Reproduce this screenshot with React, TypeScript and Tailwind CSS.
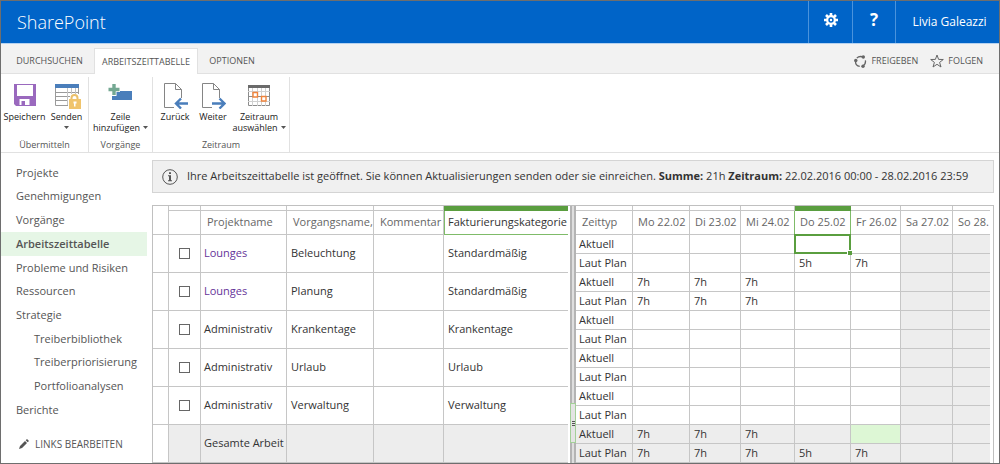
import React, { useState } from 'react';
import clsx from 'clsx';

const navLinks = [
  { label: 'Projekte' },
  { label: 'Genehmigungen' },
  { label: 'Vorgänge' },
  { label: 'Arbeitszeittabelle', active: true },
  { label: 'Probleme und Risiken' },
  { label: 'Ressourcen' },
  { label: 'Strategie' },
  { label: 'Treiberbibliothek', child: true },
  { label: 'Treiberpriorisierung', child: true },
  { label: 'Portfolioanalysen', child: true },
  { label: 'Berichte' },
];

const tasks = [
  { id: 1, project: 'Lounges', link: true, task: 'Beleuchtung', category: 'Standardmäßig' },
  { id: 2, project: 'Lounges', link: true, task: 'Planung', category: 'Standardmäßig' },
  { id: 3, project: 'Administrativ', task: 'Krankentage', category: 'Krankentage' },
  { id: 4, project: 'Administrativ', task: 'Urlaub', category: 'Urlaub' },
  { id: 5, project: 'Administrativ', task: 'Verwaltung', category: 'Verwaltung' },
];

const days = ['Mo 22.02', 'Di 23.02', 'Mi 24.02', 'Do 25.02', 'Fr 26.02', 'Sa 27.02', 'So 28.'];
const SELECTED_DAY = 3;

const hours = [
  { type: 'Aktuell', values: ['', '', '', '', '', '', ''] },
  { type: 'Laut Plan', values: ['', '', '', '5h', '7h', '', ''] },
  { type: 'Aktuell', values: ['7h', '7h', '7h', '', '', '', ''] },
  { type: 'Laut Plan', values: ['7h', '7h', '7h', '', '', '', ''] },
  { type: 'Aktuell', values: ['', '', '', '', '', '', ''] },
  { type: 'Laut Plan', values: ['', '', '', '', '', '', ''] },
  { type: 'Aktuell', values: ['', '', '', '', '', '', ''] },
  { type: 'Laut Plan', values: ['', '', '', '', '', '', ''] },
  { type: 'Aktuell', values: ['', '', '', '', '', '', ''] },
  { type: 'Laut Plan', values: ['', '', '', '', '', '', ''] },
  { type: 'Aktuell', values: ['7h', '7h', '7h', '', '', '', ''], total: true },
  { type: 'Laut Plan', values: ['7h', '7h', '7h', '5h', '7h', '', ''], total: true },
];

const SaveIcon = () => (
  <svg width="24" height="24" viewBox="0 0 24 24" className="shrink-0" aria-hidden="true">
    <path d="M1 1h22v22H3l-2-2z" fill="#9a69be" />
    <path d="M4 2h16v11H4z" fill="#fff" />
    <path d="M6.500 16h10v6h-10z" fill="#fff" />
    <path d="M8.500 18H12v5H8.500z" fill="#9a69be" />
  </svg>
);

const SendIcon = () => (
  <svg width="28" height="26" viewBox="0 0 28 26" className="shrink-0" aria-hidden="true">
    <path d="M2 1h24v4H2z" fill="#4a7ebb" />
    <path d="M2.500 5v17.500h23V5M2 9.500h24M2 13.500h24M2 17.500h24" fill="none" stroke="#9a9a9a" />
    <path d="M14.500 5v17M18.500 5v17M22.500 5v17" stroke="#c4c4c4" />
    <path d="M15 15h13v11H15zM17 11h9v5h-9z" fill="#fff" />
    <path d="M18.500 16.500V15a3 3 0 0 1 6 0v1.500" fill="none" stroke="#ebc06a" strokeWidth="2" />
    <path d="M16 16h12v10H16z" fill="#f0c46c" />
    <path d="M20.500 18.500h3v2h-1v3H21v-3h-.5z" fill="#fff" />
  </svg>
);

const AddRowIcon = () => (
  <svg width="28" height="24" viewBox="0 0 28 24" className="shrink-0" aria-hidden="true">
    <path d="M5 8h20v9H5z" fill="#4a7ebb" />
    <path d="M7 0v13M1 6.500h12" stroke="#fff" strokeWidth="5" />
    <path d="M7 1v11M1.500 6.500h11" stroke="#74a892" strokeWidth="3.400" />
  </svg>
);

const PageIcon = ({ direction }: { direction: 'back' | 'next' }) => (
  <svg width="26" height="26" viewBox="0 0 26 26" className="shrink-0" aria-hidden="true">
    <path d="M2.500 .5h11l6 6v18h-17zM13.500 .5v6h6" fill="#fff" stroke="#858585" />
    <path d="M12 15h14v11H12z" fill="#fff" />
    {direction === 'back' ? (
      <path d="M26 20.500H14M19 15.500l-5 5 5 5" fill="none" stroke="#4a7ebb" strokeWidth="2.400" />
    ) : (
      <path d="M12 20.500h12.500M19.500 15.500l5 5-5 5" fill="none" stroke="#4a7ebb" strokeWidth="2.400" />
    )}
  </svg>
);

const CalendarIcon = () => (
  <svg width="24" height="24" viewBox="0 0 24 24" className="shrink-0" aria-hidden="true">
    <path d="M1 2h22v3H1z" fill="#6a6a6a" />
    <path d="M1.500 5v17.500h21V5" fill="#fff" stroke="#8c8c8c" />
    <path d="M1 8.500h22M1 18.500h22M5.500 5v18M10.500 5v18M14.500 5v18M18.500 5v18" stroke="#d0d0d0" />
    <path d="M1 13.500h22" stroke="#8c8c8c" />
    <path d="M6 9.500h4.500V14H6zM14.500 13.500H19V18h-4.500z" fill="#fff" stroke="#f0843c" strokeWidth="1.400" />
  </svg>
);

const GearIcon = () => (
  <svg width="14" height="14" viewBox="0 0 14 14" className="shrink-0" aria-hidden="true">
    <path d="M7 0v14M0 7h14M2 2l10 10M12 2L2 12" stroke="#fff" strokeWidth="2.600" />
    <circle cx="7" cy="7" r="3.800" fill="#0064c8" stroke="#fff" strokeWidth="2.200" />
    <circle cx="7" cy="7" r="1.200" fill="#fff" />
  </svg>
);

const ShareIcon = () => (
  <svg width="13" height="13" viewBox="0 0 13 13" className="shrink-0" aria-hidden="true">
    <circle cx="6.500" cy="6.500" r="5" fill="none" stroke="#666" strokeWidth="1.300" strokeDasharray="7.500 2.970" strokeDashoffset="2" />
    <circle cx="9.300" cy="2" r="1.700" fill="#666" />
    <circle cx="1.800" cy="5.500" r="1.700" fill="#666" />
    <circle cx="9" cy="11.200" r="1.700" fill="#666" />
  </svg>
);

const StarIcon = () => (
  <svg width="14" height="14" viewBox="0 0 14 14" className="shrink-0" aria-hidden="true">
    <path d="M7 1l1.600 4.400 4.700.1-3.700 2.900 1.400 4.600L7 10.300 3 13l1.400-4.600L.7 5.500l4.700-.1z" fill="none" stroke="#666" />
  </svg>
);

const InfoIcon = () => (
  <svg width="16" height="16" viewBox="0 0 16 16" className="shrink-0" aria-hidden="true">
    <circle cx="8" cy="8" r="7.300" fill="none" stroke="#555" />
    <path d="M7 3.300h2v1.600H7zM6 6.300h3v5h1v1H6v-1h1v-4H6z" fill="#555" />
  </svg>
);

const PencilIcon = () => (
  <svg width="10" height="10" viewBox="0 0 10 10" className="shrink-0" aria-hidden="true">
    <path d="M0 10l1-3 5-5 2 2-5 5zM6.700 1.300L8 0l2 2-1.300 1.300z" fill="#555" />
  </svg>
);

const Caret = () => (
  <svg width="5" height="3" viewBox="0 0 5 3" className="inline-block shrink-0 align-middle" aria-hidden="true">
    <path d="M0 0h5L2.500 3z" fill="#555" />
  </svg>
);

type RibbonButtonProps = {
  icon: React.ReactNode;
  lines: string[];
  caret?: 'inline' | 'below';
  className: string;
};

const RibbonButton: React.FC<RibbonButtonProps> = ({ icon, lines, caret, className }) => (
  <button type="button" className={clsx('flex flex-col items-center text-[9px] leading-[11px] text-[#222]', className)}>
    <span className="flex h-7 items-start justify-center">{icon}</span>
    {lines.map((line, i) => (
      <span key={line} className="flex items-center gap-[3px] whitespace-nowrap">
        {line}
        {caret === 'inline' && i === lines.length - 1 && <Caret />}
      </span>
    ))}
    {caret === 'below' && (
      <span className="flex h-[11px] items-center">
        <Caret />
      </span>
    )}
  </button>
);

const RibbonGroup: React.FC<{ label: string; className: string; children: React.ReactNode }> = ({ label, className, children }) => (
  <div className={clsx('flex flex-col justify-between border-r border-[#e1e1e1] pt-[6px] pb-[1px]', className)}>
    <div className="flex items-start justify-center">{children}</div>
    <div className="text-center text-[9px] leading-[12px] text-[#555]">{label}</div>
  </div>
);

const cell = 'overflow-hidden whitespace-nowrap border-b border-[#c6c6c6] p-0 text-left';

const App: React.FC = () => {
  const [checked, setChecked] = useState<number[]>([]);

  const toggle = (id: number) => {
    setChecked((prev) => (prev.includes(id) ? prev.filter((c) => c !== id) : [...prev, id]));
  };

  return (
    <div className="flex h-screen flex-col overflow-hidden border border-[#6e6e6e] bg-white font-['Open_Sans','Noto_Sans',sans-serif] text-[11px] text-[#333]">
      {/* Suite bar */}
      <header className="flex h-[43px] shrink-0 items-stretch border-b border-[#b5d2f0] bg-[#0064c8] text-white">
        <div className="flex flex-1 items-center pl-4 text-[18px] font-light">SharePoint</div>
        <button type="button" aria-label="Einstellungen" className="flex w-11 items-center justify-center border-l border-[#4a93dc] pb-1">
          <GearIcon />
        </button>
        <button type="button" aria-label="Hilfe" className="flex w-[43px] items-center justify-center border-l border-[#4a93dc] pb-1 text-[17px] font-bold">
          ?
        </button>
        <button type="button" className="w-[104px] border-l border-[#4a93dc] pl-1 text-[12px]">
          Livia Galeazzi
        </button>
      </header>

      {/* Ribbon tabs */}
      <div className="flex h-[30px] shrink-0 items-end border-b border-[#e1e1e1] bg-[#f2f2f2] text-[9px] text-[#555]">
        <div className="-mb-px flex flex-1 items-end">
          <button type="button" className="h-[26px] w-[93px] pl-1">DURCHSUCHEN</button>
          <button type="button" className="h-[26px] w-[104px] border border-b-0 border-[#e1e1e1] bg-white">
            ARBEITSZEITTABELLE
          </button>
          <button type="button" className="h-[26px] w-[68px]">OPTIONEN</button>
        </div>
        <div className="flex h-6 items-center gap-3 pr-4">
          <button type="button" className="flex items-center gap-1">
            <ShareIcon />
            FREIGEBEN
          </button>
          <button type="button" className="flex items-center gap-1">
            <StarIcon />
            FOLGEN
          </button>
        </div>
      </div>

      {/* Ribbon */}
      <div className="flex h-[79px] shrink-0 border-b border-[#e1e1e1] pt-[3px]">
        <RibbonGroup label="Übermitteln" className="w-[88px]">
          <RibbonButton icon={<SaveIcon />} lines={['Speichern']} className="w-[44px]" />
          <RibbonButton icon={<SendIcon />} lines={['Senden']} caret="below" className="w-10" />
        </RibbonGroup>
        <RibbonGroup label="Vorgänge" className="w-16">
          <RibbonButton icon={<AddRowIcon />} lines={['Zeile', 'hinzufügen']} caret="inline" className="w-[60px]" />
        </RibbonGroup>
        <RibbonGroup label="Zeitraum" className="w-[137px]">
          <RibbonButton icon={<PageIcon direction="back" />} lines={['Zurück']} className="w-[38px]" />
          <RibbonButton icon={<PageIcon direction="next" />} lines={['Weiter']} className="w-[38px]" />
          <RibbonButton icon={<CalendarIcon />} lines={['Zeitraum', 'auswählen']} caret="inline" className="w-[54px]" />
        </RibbonGroup>
      </div>

      <div className="flex min-h-0 flex-1">
        {/* Quick launch */}
        <nav className="w-[146px] shrink-0 pt-2">
          <ul className="grid h-[261px] auto-rows-fr">
            {navLinks.map((link) => (
              <li key={link.label} className={clsx('flex items-center', link.active && 'bg-[#e6f6e6]')}>
                <a
                  href="#"
                  className={clsx('whitespace-nowrap text-[#555]', link.child ? 'pl-[33px]' : 'pl-[15px]', link.active && 'font-semibold')}
                >
                  {link.label}
                </a>
              </li>
            ))}
          </ul>
          <a href="#" className="mt-[10px] flex h-6 items-center gap-[6px] pl-[18px] text-[10px] text-[#555]">
            <PencilIcon />
            LINKS BEARBEITEN
          </a>
        </nav>

        <main className="flex min-w-0 flex-1 flex-col pl-[5px] pr-[5px] pt-[7px]">
          <div className="flex h-[33px] shrink-0 items-center gap-[9px] border border-[#d4d4d4] bg-[#f0f0f0] pl-[9px]">
            <InfoIcon />
            <p className="whitespace-nowrap">
              Ihre Arbeitszeittabelle ist geöffnet. Sie können Aktualisierungen senden oder sie einreichen.{' '}
              <b>Summe:</b> 21h <b>Zeitraum:</b> 22.02.2016 00:00 - 28.02.2016 23:59
            </p>
          </div>

          <div className="mt-3 flex min-h-0 flex-1 items-start overflow-hidden border border-b-0 border-[#c0c0c0]">
            {/* Task list */}
            <table className="w-[415px] shrink-0 table-fixed border-separate border-spacing-0">
              <colgroup>
                <col className="w-4" />
                <col className="w-8" />
                <col className="w-[86px]" />
                <col className="w-[87px]" />
                <col className="w-[70px]" />
                <col className="w-[124px]" />
              </colgroup>
              <thead className="text-[#666]">
                <tr className="h-[5px]" aria-hidden="true">
                  <td className="border-r border-[#c6c6c6] p-0" />
                  <td className="border-r border-b border-[#c6c6c6] p-0" />
                  <td className="border-r border-b border-[#c6c6c6] p-0" />
                  <td className="border-r border-b border-[#c6c6c6] p-0" />
                  <td className="border-r border-b border-[#c6c6c6] p-0" />
                  <td className="bg-[#5a9e3f] p-0" />
                </tr>
                <tr className="h-6">
                  <td className={clsx(cell, 'border-r')} />
                  <td className={clsx(cell, 'border-r')} />
                  <th className={clsx(cell, 'border-r pl-[6px] font-normal')}>Projektname</th>
                  <th className={clsx(cell, 'border-r pl-[6px] font-normal')}>Vorgangsname,</th>
                  <th className={clsx(cell, 'border-r pl-[6px] font-normal')}>Kommentar</th>
                  <th className="whitespace-nowrap border-b border-l border-[#7fbb69] p-0 pl-[3px] text-left font-normal text-[#333]">
                    Fakturierungskategorie
                  </th>
                </tr>
              </thead>
              <tbody>
                {tasks.map((row) => (
                  <tr key={row.id} className="h-[38px]">
                    <td className={clsx(cell, 'border-r')} />
                    <td className={clsx(cell, 'border-r')}>
                      <input
                        type="checkbox"
                        aria-label={`${row.project} ${row.task}`}
                        checked={checked.includes(row.id)}
                        onChange={() => toggle(row.id)}
                        className="mx-auto block size-[11px] appearance-none border border-[#666] bg-white checked:bg-[#5a9e3f]"
                      />
                    </td>
                    <td className={clsx(cell, 'border-r pl-[3px]')}>
                      {row.link ? <a href="#" className="text-[#663399]">{row.project}</a> : row.project}
                    </td>
                    <td className={clsx(cell, 'border-r pl-1')}>{row.task}</td>
                    <td className={clsx(cell, 'border-r')} />
                    <td className={clsx(cell, 'pl-1')}>{row.category}</td>
                  </tr>
                ))}
                <tr className="h-[38px]">
                  <td className={clsx(cell, 'border-r')} />
                  <td className={clsx(cell, 'border-r bg-[#ededed]')} />
                  <td className={clsx(cell, 'border-r bg-[#ededed] pl-[3px]')}>Gesamte Arbeit</td>
                  <td className={clsx(cell, 'border-r bg-[#ededed]')} />
                  <td className={clsx(cell, 'border-r bg-[#ededed]')} />
                  <td className={clsx(cell, 'bg-[#ededed]')} />
                </tr>
              </tbody>
            </table>

            {/* Splitter */}
            <div className="ml-[2px] flex w-[6px] shrink-0 flex-col self-stretch border-x-2 border-[#b4b4b4] bg-[#dedede]">
              <div className="-mx-[2px] mt-[197px] flex h-10 flex-col items-center justify-center gap-px border border-[#a3cf98] bg-[#e4e4e4]">
                <span className="h-px w-[3px] bg-[#555]" />
                <span className="h-px w-[3px] bg-[#555]" />
                <span className="h-px w-[3px] bg-[#555]" />
              </div>
            </div>

            {/* Hours per day */}
            <div className="min-w-0 flex-1 overflow-hidden pr-[3px]">
              <table className="w-full table-fixed border-separate border-spacing-0">
                <colgroup>
                  <col className="w-[57px]" />
                  <col className="w-[57px]" />
                  <col className="w-[51px]" />
                  <col className="w-[54px]" />
                  <col className="w-[56px]" />
                  <col className="w-[50px]" />
                  <col className="w-[52px]" />
                  <col />
                </colgroup>
                <thead className="text-[#666]">
                  <tr className="h-[5px]" aria-hidden="true">
                    <td className="border-r border-b border-[#c6c6c6] p-0" />
                    {days.map((day, i) => (
                      <td
                        key={day}
                        className={clsx(
                          'p-0',
                          i === SELECTED_DAY ? 'bg-[#5a9e3f]' : 'border-b border-[#c6c6c6]',
                          i !== SELECTED_DAY && i < 6 && 'border-r',
                        )}
                      />
                    ))}
                  </tr>
                  <tr className="h-6">
                    <th className={clsx(cell, 'border-r pl-[6px] font-normal')}>Zeittyp</th>
                    {days.map((day, i) => (
                      <th
                        key={day}
                        className={clsx(
                          cell,
                          'pl-[5px] font-normal',
                          i < 6 && 'border-r',
                          (i === SELECTED_DAY || i === SELECTED_DAY - 1) && 'border-r-[#7fbb69]',
                        )}
                      >
                        {day}
                      </th>
                    ))}
                  </tr>
                </thead>
                <tbody>
                  {hours.map((row, r) => (
                    <tr key={r} className={clsx('h-[19px] leading-[18px]', row.total && 'bg-[#ededed]')}>
                      <td className={clsx(cell, 'border-r pl-[3px]')}>{row.type}</td>
                      {row.values.map((value, i) => {
                        const selected = r === 0 && i === SELECTED_DAY;
                        return (
                          <td
                            key={i}
                            className={clsx(
                              'whitespace-nowrap border-b border-[#c6c6c6] p-0 pl-1',
                              i < 6 && 'border-r',
                              i > 4 && 'bg-[#ededed]',
                              r === 10 && i === 4 && 'bg-[#ddf7d5]',
                              selected && 'relative',
                            )}
                          >
                            {value}
                            {selected && (
                              <span className="absolute -inset-x-px -top-px -bottom-px border-2 border-[#5a9e3f]">
                                <span className="absolute -right-[3px] -bottom-[3px] size-[5px] border-t border-l border-white bg-[#5a9e3f]" />
                              </span>
                            )}
                          </td>
                        );
                      })}
                    </tr>
                  ))}
                </tbody>
              </table>
            </div>
          </div>
        </main>
      </div>
    </div>
  );
};

export default App;
